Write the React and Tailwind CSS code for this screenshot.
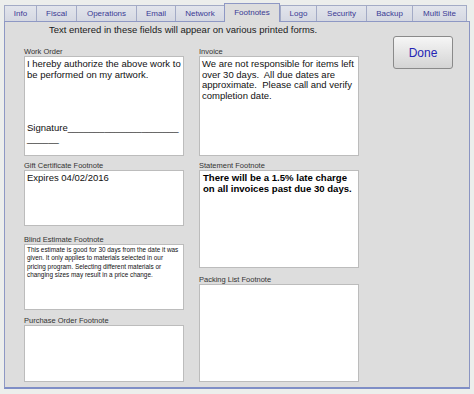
import React from "react";

const tabs = [
  { name: "Info", w: "w-[32px]" },
  { name: "Fiscal", w: "w-[40px]" },
  { name: "Operations", w: "w-[60px]" },
  { name: "Email", w: "w-[39px]" },
  { name: "Network", w: "w-[49px]" },
  { name: "Footnotes", w: "w-[56px]", active: true },
  { name: "Logo", w: "w-[36px]" },
  { name: "Security", w: "w-[50px]" },
  { name: "Backup", w: "w-[46px]" },
  { name: "Multi Site", w: "w-[55px]", last: true },
];

function Label({ children, mt }) {
  return (
    <div className={`text-[7.5px] leading-[8px] h-[8px] text-[#333333] whitespace-nowrap ${mt}`}>
      {children}
    </div>
  );
}

function Box({ h, children, cls = "" }) {
  return (
    <div
      className={`${h} w-[160px] bg-white border border-[#bcbcbc] overflow-hidden whitespace-pre text-[#111111] ${cls}`}
    >
      {children}
    </div>
  );
}

export default function App() {
  return (
    <div className="w-[474px] h-[394px] bg-[#eceeec] pt-[3px] font-['Liberation_Sans',Arial,sans-serif] overflow-hidden">
      {/* Tabs */}
      <div className="flex items-end pl-[4px] h-[18px]">
        {tabs.map((t) =>
          t.active ? (
            <div
              key={t.name}
              className={`${t.w} h-[19px] -mb-[1px] relative z-10 bg-[#dddddd] border-t border-l border-r border-[#8e98c4] flex items-center justify-center text-[8px] text-[#3a3a94] pb-[1px]`}
            >
              {t.name}
            </div>
          ) : (
            <div
              key={t.name}
              className={`${t.w} h-[16px] bg-gradient-to-b from-[#e2e5ec] to-[#d5d8e2] border-t border-l ${t.last ? "border-r" : ""} border-[#a3abc6] flex items-center justify-center text-[8px] text-[#3a3a94]`}
            >
              {t.name}
            </div>
          )
        )}
      </div>

      {/* Panel */}
      <div className="ml-[4px] w-[466px] h-[368px] bg-[#dddddd] border-t border-l border-r border-b-2 border-t-[#8e98c4] border-l-[#8e98c4] border-r-[#8a94c2] border-b-[#7f8ec6] flex">
        <div className="flex flex-col w-[355px]">
          <div className="mt-[2px] ml-[44px] text-[9.5px] leading-[11px] text-[#1a1a1a] whitespace-nowrap">
            Text entered in these fields will appear on various printed forms.
          </div>
          <div className="flex mt-[13px] ml-[19px] gap-[15px]">
            {/* Left column */}
            <div className="flex flex-col">
              <Label mt="">Work Order</Label>
              <Box h="h-[100px]" cls="text-[9.5px] leading-[10.7px] pl-[2px] pt-[2px]">
                {"I hereby authorize the above work to\nbe performed on my artwork.\n\n\n\n\nSignature_____________________\n______"}
              </Box>
              <Label mt="mt-[6px]">Gift Certificate Footnote</Label>
              <Box h="h-[56px]" cls="text-[9.5px] leading-[10.7px] pl-[2px] pt-[2px]">
                {"Expires 04/02/2016"}
              </Box>
              <Label mt="mt-[10px]">Blind Estimate Footnote</Label>
              <Box h="h-[66px]" cls="text-[6.4px] leading-[8.3px] pl-[2px] pt-[1px]">
                {"This estimate is good for 30 days from the date it was\ngiven. It only applies to materials selected in our\npricing program. Selecting different materials or\nchanging sizes may result in a price change."}
              </Box>
              <Label mt="mt-[7px]">Purchase Order Footnote</Label>
              <Box h="h-[57px]" />
            </div>
            {/* Right column */}
            <div className="flex flex-col">
              <Label mt="">Invoice</Label>
              <Box h="h-[100px]" cls="text-[9.5px] leading-[10.7px] pl-[2px] pt-[2px]">
                {"We are not responsible for items left\nover 30 days.  All due dates are\napproximate.  Please call and verify\ncompletion date."}
              </Box>
              <Label mt="mt-[6px]">Statement Footnote</Label>
              <Box h="h-[98px]" cls="text-[9.6px] leading-[10.7px] font-bold pl-[3px] pt-[2px] text-black">
                {"There will be a 1.5% late charge\non all invoices past due 30 days."}
              </Box>
              <Label mt="mt-[8px]">Packing List Footnote</Label>
              <Box h="h-[98px]" />
            </div>
          </div>
        </div>
        <div className="ml-[33px] mt-[14px]">
          <button className="w-[60px] h-[33px] rounded-[3px] border border-[#8a8a8a] bg-gradient-to-b from-[#f6f6f6] to-[#d4d4d4] text-[12px] text-[#2424b4] flex items-center justify-center">
            Done
          </button>
        </div>
      </div>
    </div>
  );
}
